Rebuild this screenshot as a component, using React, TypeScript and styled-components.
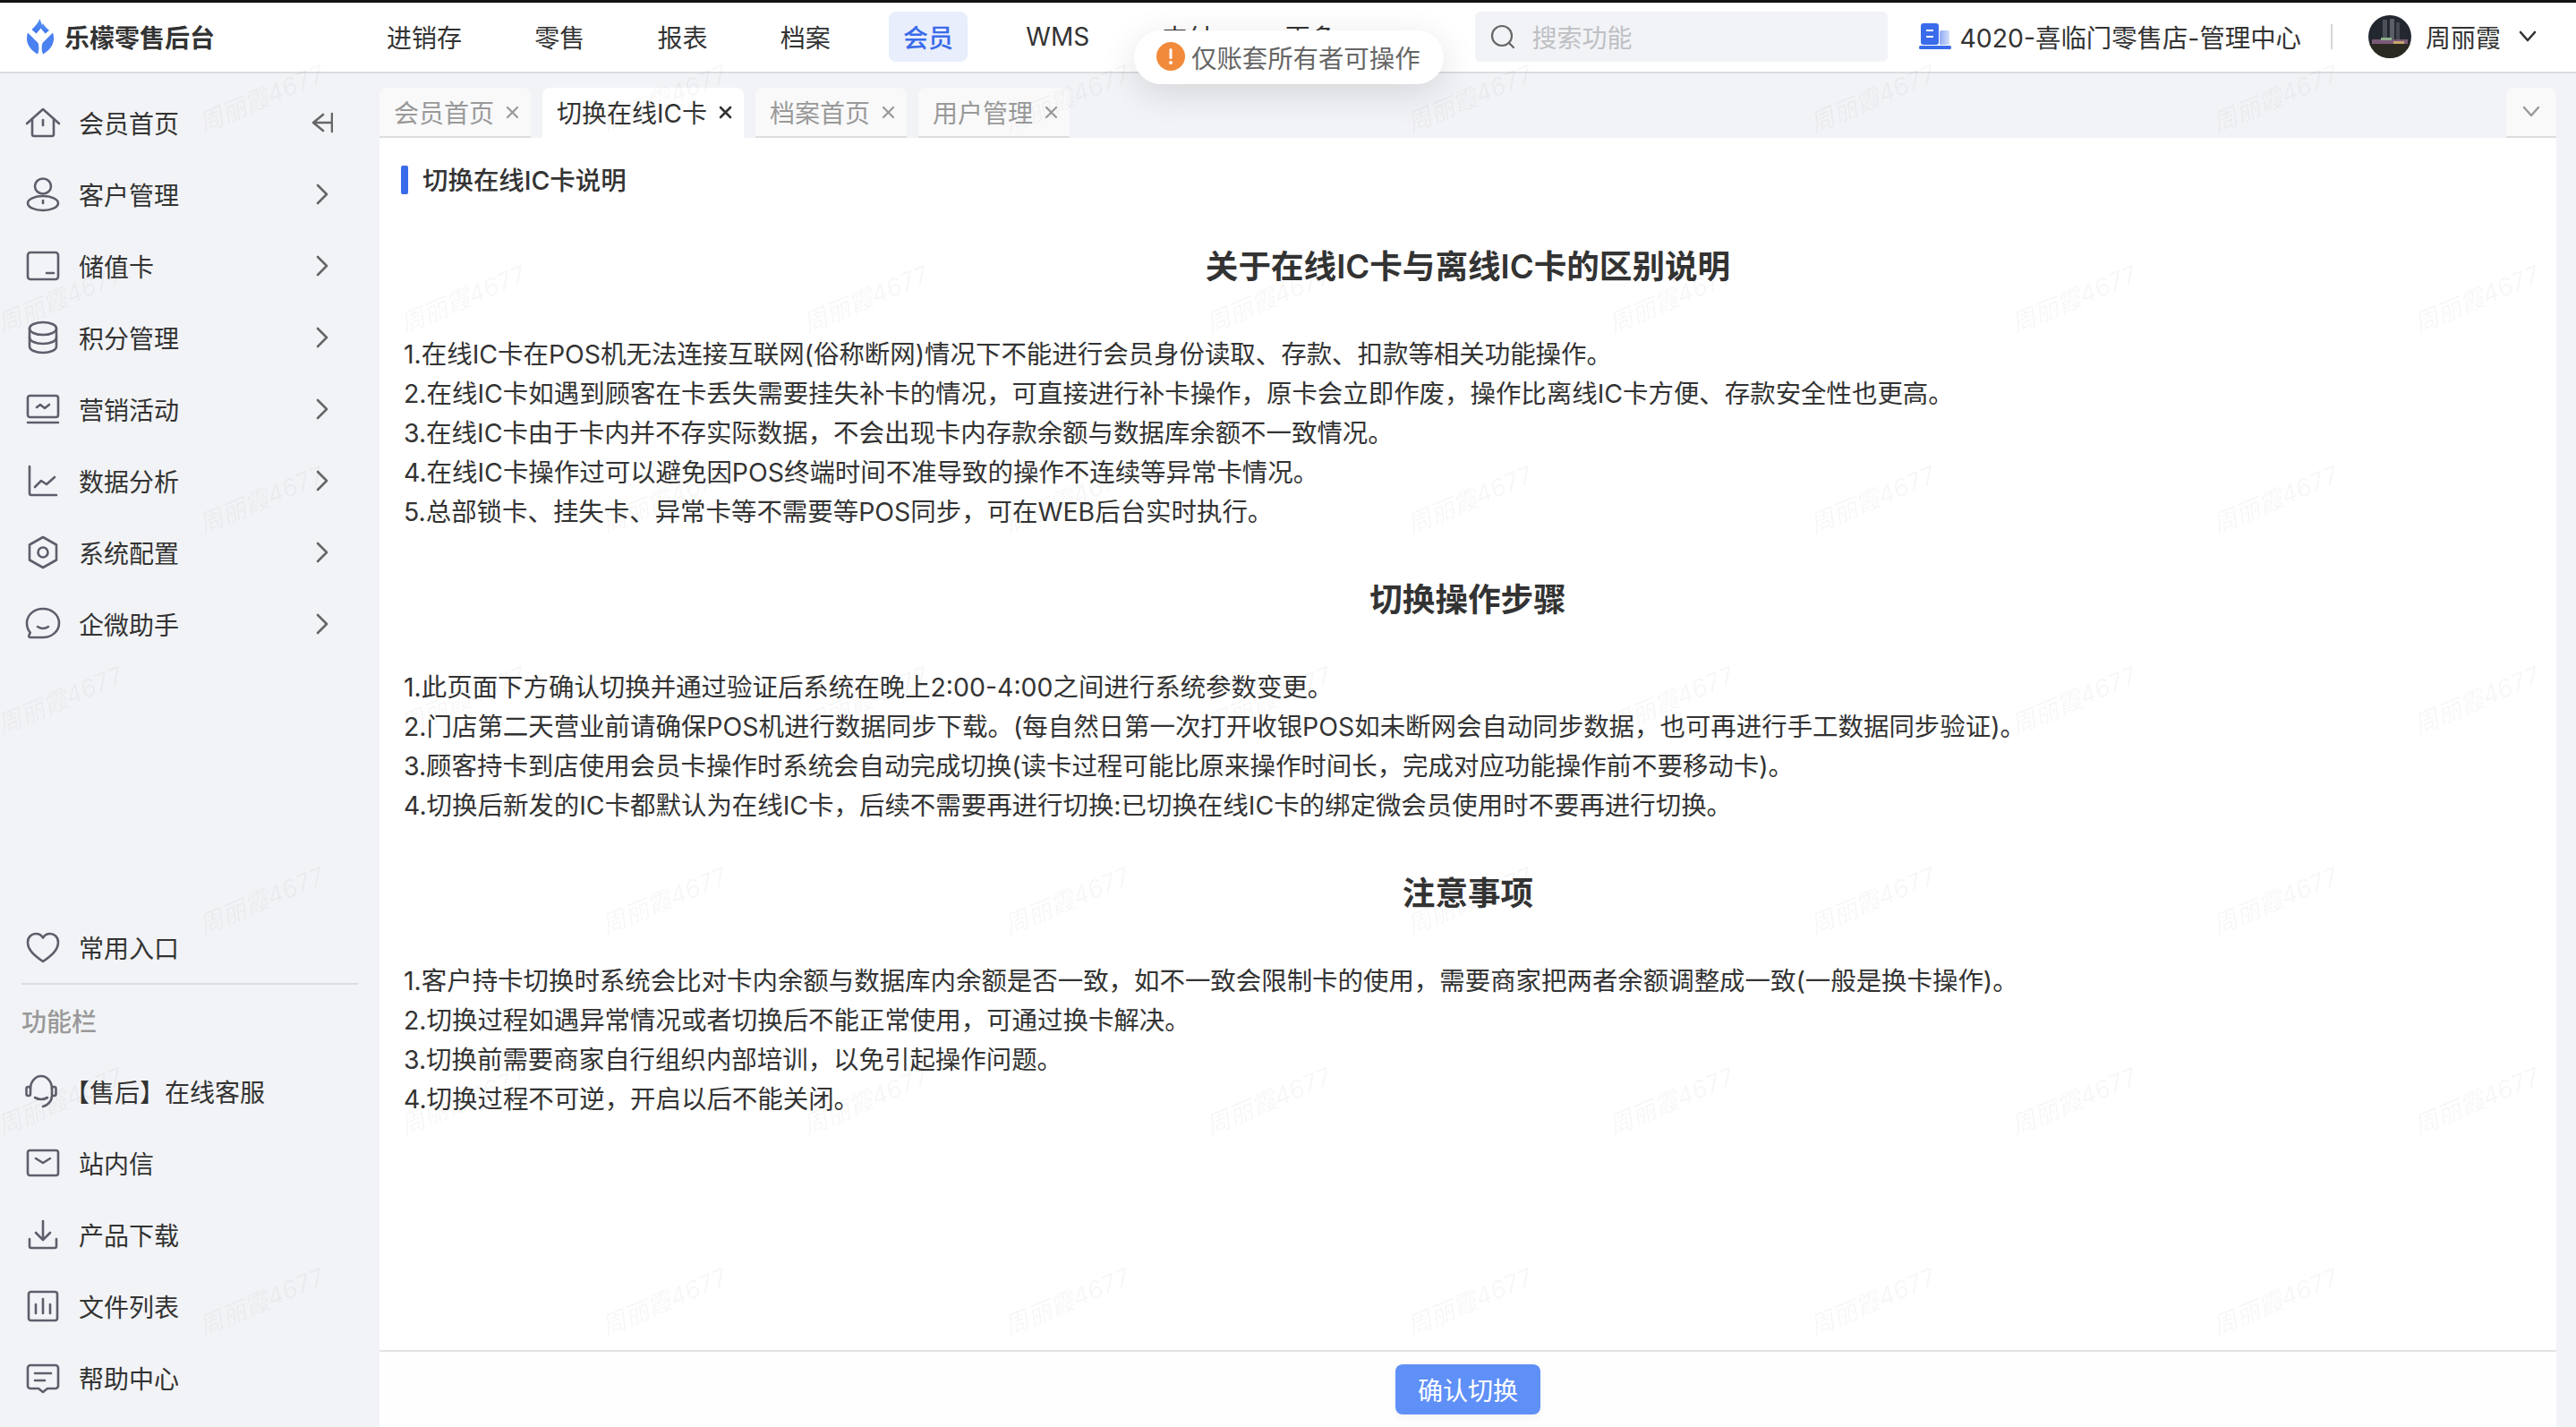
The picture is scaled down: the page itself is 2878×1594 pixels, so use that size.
import * as React from 'react';
import styled, { createGlobalStyle } from 'styled-components';

const GlobalStyle = createGlobalStyle`
  html, body {
    margin: 0;
    padding: 0;
    height: 100%;
    overflow: hidden;
    background: #f2f3f6;
    font-family: Inter, "Noto Sans CJK SC", sans-serif;
    color: #333;
  }
  * {
    box-sizing: border-box;
  }
`;

const Page = styled.div`
  position: relative;
  display: flex;
  flex-direction: column;
  height: 1594px;
  overflow: hidden;
`;
const TopStrip = styled.div`
  height: 3px;
  flex-shrink: 0;
  background: #121212;
`;
const Header = styled.header`
  display: flex;
  align-items: center;
  flex-shrink: 0;
  height: 79px;
  padding-right: 44px;
  padding-bottom: 2px;
  background: #fff;
  border-bottom: 2px solid #dcdde0;
  font-size: 28px;
`;
const Brand = styled.div`
  display: flex;
  align-items: center;
  flex-shrink: 0;
  gap: 12px;
  width: 416px;
  padding-left: 30px;
`;
const BrandName = styled.span`
  font-weight: 700;
  color: #333;
`;
const Nav = styled.nav`
  display: flex;
  align-items: center;
  gap: 49.25px;
`;
const NavItem = styled.div<{ $active?: boolean }>`
  display: flex;
  align-items: center;
  height: 56px;
  padding: 0 16px;
  border-radius: 8px;
  background: ${(p) => (p.$active ? '#e8eefb' : 'transparent')};
  color: ${(p) => (p.$active ? '#3a6bea' : '#333')};
  font-weight: ${(p) => (p.$active ? 500 : 400)};
`;
const Search = styled.div`
  display: flex;
  align-items: center;
  gap: 18px;
  width: 461px;
  height: 56px;
  margin-left: auto;
  padding-left: 17px;
  border-radius: 6px;
  background: #f2f3f6;
  color: #bfc0c4;
`;
const Shop = styled.div`
  display: flex;
  align-items: center;
  gap: 9px;
  margin-left: 35px;
  font-size: 28.4px;
`;
const HeaderDivider = styled.div`
  width: 2px;
  height: 28px;
  margin: 0 40px 0 33px;
  background: #d4d5d8;
`;
const User = styled.div`
  display: flex;
  align-items: center;
`;
const UserName = styled.span`
  margin: 0 20px 0 16px;
`;
const Avatar = styled.svg`
  display: block;
  width: 48px;
  height: 48px;
`;

const Toast = styled.div`
  position: absolute;
  top: 34px;
  left: 1267px;
  z-index: 5;
  display: flex;
  align-items: center;
  gap: 7px;
  height: 60px;
  padding: 0 26px 2px 25px;
  border-radius: 30px;
  background: #fff;
  box-shadow: 0 10px 40px rgba(0, 0, 0, 0.12);
  font-size: 28.4px;
  color: #666;
`;

const Body = styled.div`
  display: flex;
  flex: 1;
  min-height: 0;
`;
const Sidebar = styled.aside`
  display: flex;
  flex-direction: column;
  flex-shrink: 0;
  width: 424px;
  padding: 15px 0 15px;
  font-size: 28px;
`;
const SideGroup = styled.div<{ $bottom?: boolean }>`
  display: flex;
  flex-direction: column;
  margin-top: ${(p) => (p.$bottom ? 'auto' : '0')};
`;
const SideItem = styled.div`
  display: flex;
  align-items: center;
  height: 80px;
  padding: 0 52px 0 28px;
`;
const SideIcon = styled.svg`
  flex-shrink: 0;
  width: 40px;
  height: 40px;
  fill: none;
  stroke: #5c5f6b;
  stroke-width: 2.6;
  stroke-linecap: round;
  stroke-linejoin: round;
`;
const SideLabel = styled.span<{ $pull?: boolean }>`
  flex: 1;
  margin-left: ${(p) => (p.$pull ? '4px' : '20px')};
`;
const SideChevron = styled.svg`
  flex-shrink: 0;
  width: 24px;
  height: 24px;
  fill: none;
  stroke: #666;
  stroke-width: 2.6;
  stroke-linecap: round;
  stroke-linejoin: round;
`;
const SideDivider = styled.div`
  height: 2px;
  margin: 0 24px;
  background: #dcdde0;
`;
const SideTitle = styled.div`
  display: flex;
  align-items: center;
  height: 79px;
  padding-left: 24px;
  font-weight: 500;
  color: #999;
`;

const Main = styled.main`
  display: flex;
  flex-direction: column;
  flex: 1;
  min-width: 0;
  padding-right: 22px;
`;
const TabBar = styled.div`
  display: flex;
  flex-shrink: 0;
  gap: 13px;
  height: 72px;
  padding-top: 16px;
  font-size: 28px;
`;
const Tab = styled.div<{ $active?: boolean }>`
  display: flex;
  align-items: center;
  gap: 13px;
  padding: 0 13px 0 16px;
  border-radius: 8px 8px 0 0;
  background: ${(p) => (p.$active ? '#fff' : '#f9f9fa')};
  border-bottom: 2px solid ${(p) => (p.$active ? '#fff' : '#dcdde0')};
  color: ${(p) => (p.$active ? '#333' : '#999')};
`;
const TabMore = styled(Tab)`
  justify-content: center;
  width: 56px;
  margin-left: auto;
  padding: 0;
`;
const TabClose = styled.svg<{ $active?: boolean }>`
  width: 15px;
  height: 15px;
  fill: none;
  stroke: ${(p) => (p.$active ? '#333' : '#999')};
  stroke-width: ${(p) => (p.$active ? 2.6 : 2.2)};
  stroke-linecap: round;
`;
const Panel = styled.section`
  display: flex;
  flex-direction: column;
  flex: 1;
  min-height: 0;
  background: #fff;
`;
const Article = styled.div`
  flex: 1;
  min-height: 0;
  padding: 29px 26px 0;
  font-size: 28.45px;
`;
const SectionHead = styled.div`
  display: flex;
  align-items: center;
  gap: 16px;
  height: 32px;
  margin-left: -2px;
  font-weight: 500;
  color: #333;
  &::before {
    content: '';
    width: 8px;
    height: 32px;
    margin-top: 3px;
    border-radius: 2px;
    background: #3a6bea;
  }
`;
const Heading = styled.h2<{ $first?: boolean }>`
  margin: ${(p) => (p.$first ? '56px' : '49px')} 0 49px;
  font-size: 36.6px;
  line-height: 54px;
  font-weight: 600;
  text-align: center;
  color: #333;
`;
const Line = styled.p`
  margin: 0 0 0 1px;
  line-height: 44px;
  white-space: nowrap;
  color: #333;
`;
const Footer = styled.footer`
  display: flex;
  justify-content: center;
  flex-shrink: 0;
  height: 86px;
  padding-top: 14px;
  border-top: 2px solid #e2e2e2;
  background: #fefefe;
`;
const ConfirmButton = styled.button`
  width: 162px;
  height: 56px;
  padding: 0;
  border: none;
  border-radius: 8px;
  background: #5f90f7;
  box-shadow: 0 3px 8px rgba(0, 0, 0, 0.05);
  font: inherit;
  font-size: 28px;
  color: #fff;
`;

const Watermarks = styled.div`
  position: absolute;
  top: -4px;
  left: 0;
  right: 0;
  bottom: 0;
  z-index: 4;
  overflow: hidden;
  pointer-events: none;
`;
const WatermarkRow = styled.div<{ $odd?: boolean }>`
  display: flex;
  height: 224px;
  margin-left: ${(p) => (p.$odd ? '-159px' : '66px')};
`;
const Watermark = styled.span`
  display: flex;
  align-items: center;
  justify-content: center;
  flex-shrink: 0;
  width: 450px;
  font-size: 27.5px;
  font-style: italic;
  color: rgba(0, 0, 0, 0.045);
  transform: rotate(-23deg);
`;

const menuIcons: Record<string, React.ReactNode> = {
  home: (
    <>
      <path d="M2 21 20 5l18 16" />
      <path d="M8 16v17a2 2 0 0 0 2 2h20a2 2 0 0 0 2-2V16" />
      <path d="M20 17v6" />
    </>
  ),
  user: (
    <>
      <ellipse cx="20" cy="11" rx="9" ry="8.5" />
      <ellipse cx="20" cy="30" rx="17" ry="8" />
      <path d="M20 27v3" />
    </>
  ),
  card: (
    <>
      <rect x="3" y="5" width="34" height="30" rx="3" />
      <path d="M24 28h8" />
    </>
  ),
  coins: (
    <>
      <ellipse cx="20" cy="10" rx="15" ry="7" />
      <path d="M5 10v20c0 4 7 7 15 7s15-3 15-7V10" />
      <path d="M5 20c0 4 7 7 15 7s15-3 15-7" />
    </>
  ),
  screen: (
    <>
      <rect x="3" y="5" width="34" height="24" rx="2.5" />
      <path d="M3 35h34" />
      <path d="M13 18l4-3 5 4 5-4" />
    </>
  ),
  chart: (
    <>
      <path d="M5 4v30a2 2 0 0 0 2 2h28" />
      <path d="M11 27l7-7 6 4 9-8" />
    </>
  ),
  hex: (
    <>
      <path d="M20 3l15 8.5v17L20 37 5 28.5v-17z" />
      <circle cx="20" cy="20" r="5.5" />
    </>
  ),
  chat: (
    <>
      <path d="M20 3c10 0 18 7 18 16s-8 16-18 16H6c-1.5 0-2.2-1-1.6-2.2l1.4-3.2C3.4 27 2 23.500 2 19 2 10 10 3 20 3z" />
      <path d="M14 23q6 4 12 0" />
    </>
  ),
  heart: (
    <path d="M20 36C10 29 3 23 3 14.500 3 8.500 7.500 5 12 5c3.500 0 6.500 1.800 8 4.500C21.500 6.800 24.500 5 28 5c4.500 0 9 3.500 9 9.500C37 23 30 29 20 36z" />
  ),
  headset: (
    <>
      <path d="M6 17C6 8.500 12 3 18 3s12 5.500 12 14" />
      <rect x="1.500" y="15" width="4.500" height="10" rx="2" />
      <rect x="30" y="15" width="4.500" height="10" rx="2" />
      <path d="M11 27q7 4 14 0" />
      <path d="M30 25c0 6-5 11-10 12" />
    </>
  ),
  mail: (
    <>
      <rect x="3" y="6" width="34" height="28" rx="2.5" />
      <path d="M12 15l8 5 8-5" />
    </>
  ),
  download: (
    <>
      <path d="M20 5v20" />
      <path d="M12 18l8 8 8-8" />
      <path d="M5 25v8a2 2 0 0 0 2 2h26a2 2 0 0 0 2-2v-8" />
    </>
  ),
  bars: (
    <>
      <rect x="4" y="4" width="32" height="32" rx="2.5" />
      <path d="M12 18v10M20 12v16M28 18v10" />
    </>
  ),
  help: (
    <>
      <path d="M6 6h28a3 3 0 0 1 3 3v20a3 3 0 0 1-3 3h-9l-5 4-5-4H6a3 3 0 0 1-3-3V9a3 3 0 0 1 3-3z" />
      <path d="M11 15h18M11 23h11" />
    </>
  ),
};

const MenuIcon = ({ name }: { name: string }) => <SideIcon viewBox="0 0 40 40">{menuIcons[name]}</SideIcon>;

const topMenu = [
  { icon: 'home', label: '会员首页', collapse: true },
  { icon: 'user', label: '客户管理' },
  { icon: 'card', label: '储值卡' },
  { icon: 'coins', label: '积分管理' },
  { icon: 'screen', label: '营销活动' },
  { icon: 'chart', label: '数据分析' },
  { icon: 'hex', label: '系统配置' },
  { icon: 'chat', label: '企微助手' },
];
const toolMenu = [
  { icon: 'headset', label: '【售后】在线客服', pull: true },
  { icon: 'mail', label: '站内信' },
  { icon: 'download', label: '产品下载' },
  { icon: 'bars', label: '文件列表' },
  { icon: 'help', label: '帮助中心' },
];
const navItems = ['进销存', '零售', '报表', '档案', '会员', 'WMS', '支付', '更多'];
const tabs = ['会员首页', '切换在线IC卡', '档案首页', '用户管理'];

const sections = [
  {
    title: '关于在线IC卡与离线IC卡的区别说明',
    lines: [
      '1.在线IC卡在POS机无法连接互联网(俗称断网)情况下不能进行会员身份读取、存款、扣款等相关功能操作。',
      '2.在线IC卡如遇到顾客在卡丢失需要挂失补卡的情况，可直接进行补卡操作，原卡会立即作废，操作比离线IC卡方便、存款安全性也更高。',
      '3.在线IC卡由于卡内并不存实际数据，不会出现卡内存款余额与数据库余额不一致情况。',
      '4.在线IC卡操作过可以避免因POS终端时间不准导致的操作不连续等异常卡情况。',
      '5.总部锁卡、挂失卡、异常卡等不需要等POS同步，可在WEB后台实时执行。',
    ],
  },
  {
    title: '切换操作步骤',
    lines: [
      '1.此页面下方确认切换并通过验证后系统在晚上2:00-4:00之间进行系统参数变更。',
      '2.门店第二天营业前请确保POS机进行数据同步下载。(每自然日第一次打开收银POS如未断网会自动同步数据，也可再进行手工数据同步验证)。',
      '3.顾客持卡到店使用会员卡操作时系统会自动完成切换(读卡过程可能比原来操作时间长，完成对应功能操作前不要移动卡)。',
      '4.切换后新发的IC卡都默认为在线IC卡，后续不需要再进行切换:已切换在线IC卡的绑定微会员使用时不要再进行切换。',
    ],
  },
  {
    title: '注意事项',
    lines: [
      '1.客户持卡切换时系统会比对卡内余额与数据库内余额是否一致，如不一致会限制卡的使用，需要商家把两者余额调整成一致(一般是换卡操作)。',
      '2.切换过程如遇异常情况或者切换后不能正常使用，可通过换卡解决。',
      '3.切换前需要商家自行组织内部培训，以免引起操作问题。',
      '4.切换过程不可逆，开启以后不能关闭。',
    ],
  },
];

const RightChevron = () => (
  <SideChevron viewBox="0 0 24 24">
    <path d="M7 2l10 10L7 22" />
  </SideChevron>
);

const CollapseIcon = () => (
  <SideChevron viewBox="0 0 24 24">
    <path d="M13 3 2 12l11 9M2 12h21M23 2v20" />
  </SideChevron>
);

const Logo = () => (
  <svg width="30" height="40" viewBox="0 0 30 40">
    <defs>
      <linearGradient id="logoFill" x1="0" y1="0" x2="0" y2="1">
        <stop offset="0" stopColor="#5a93f6" />
        <stop offset="1" stopColor="#3f74ee" />
      </linearGradient>
    </defs>
    <g fill="url(#logoFill)">
      <path d="M14.500 0C13 4 9 8.500 5.500 12L10.500 16.500 17.500 8.500 14.500 0Z" />
      <path d="M18 5C19.500 8 22.500 11 25 13L20.500 16.500 15.500 10.500Z" />
    </g>
    <path d="M1 15.500 12.500 27C14 31 13.500 36 12 39.500 5.500 36 0 29.500 0 22.500 0 20 .3 17.500 1 15.500Z" fill="#4a80f0" />
    <path d="M29 15.500 17.500 27C16 31 16.500 36 18 39.500 24.500 36 30 29.500 30 22.500 30 20 29.700 17.500 29 15.500Z" fill="#4a80f0" />
  </svg>
);

const ShopIcon = () => (
  <svg width="36" height="30" viewBox="0 0 36 30">
    <defs>
      <linearGradient id="shopSide" x1="0" y1="0" x2="1" y2="0">
        <stop offset="0" stopColor="#8eaaf2" />
        <stop offset="1" stopColor="#d5e0fa" />
      </linearGradient>
    </defs>
    <rect x="2" y="0" width="20" height="24" rx="3" fill="#3a6bea" />
    <rect x="23" y="8" width="11" height="16" rx="1.500" fill="url(#shopSide)" />
    <rect x="0" y="25" width="36" height="4" rx="1.500" fill="#3a6bea" />
    <path d="M8 8h8M8 15h8" stroke="#fff" strokeWidth="2" />
  </svg>
);

const UserAvatar = () => (
  <Avatar viewBox="0 0 48 48">
    <defs>
      <clipPath id="avatarClip">
        <circle cx="24" cy="24" r="24" />
      </clipPath>
    </defs>
    <g clipPath="url(#avatarClip)">
      <rect width="48" height="48" fill="#23272f" />
      <rect y="32" width="48" height="16" fill="#2b2a22" />
      <rect x="16" y="5" width="5" height="22" fill="#4c5058" />
      <rect x="24" y="4" width="5" height="23" fill="#5a5e66" />
      <rect x="31" y="8" width="4" height="19" fill="#454952" />
      <rect x="4" y="27" width="40" height="5" fill="#7a5a78" />
      <rect x="14" y="25" width="12" height="3" fill="#8fb08a" />
      <rect x="28" y="29" width="12" height="3" fill="#c9a36a" />
    </g>
  </Avatar>
);

const App = () => (
  <Page>
    <GlobalStyle />
    <TopStrip />
    <Header>
      <Brand>
        <Logo />
        <BrandName>乐檬零售后台</BrandName>
      </Brand>
      <Nav>
        {navItems.map((item) => (
          <NavItem key={item} $active={item === '会员'}>
            {item}
          </NavItem>
        ))}
      </Nav>
      <Search>
        <svg width="28" height="28" viewBox="0 0 28 28" fill="none" stroke="#666" strokeWidth="2.200" strokeLinecap="round">
          <circle cx="13" cy="13" r="11" />
          <path d="M21 21l5 5" />
        </svg>
        搜索功能
      </Search>
      <Shop>
        <ShopIcon />
        <span>4020-喜临门零售店-管理中心</span>
      </Shop>
      <HeaderDivider />
      <User>
        <UserAvatar />
        <UserName>周丽霞</UserName>
        <svg width="20" height="14" viewBox="0 0 20 14" fill="none" stroke="#333" strokeWidth="2.600" strokeLinecap="round" strokeLinejoin="round">
          <path d="M2 2l8 9 8-9" />
        </svg>
      </User>
    </Header>
    <Toast>
      <svg width="32" height="32" viewBox="0 0 32 32">
        <circle cx="16" cy="16" r="16" fill="#f28a3b" />
        <rect x="14.500" y="7" width="3" height="12" rx="1.500" fill="#fff" />
        <circle cx="16" cy="23" r="2" fill="#fff" />
      </svg>
      仅账套所有者可操作
    </Toast>
    <Body>
      <Sidebar>
        <SideGroup>
          {topMenu.map((item) => (
            <SideItem key={item.label}>
              <MenuIcon name={item.icon} />
              <SideLabel>{item.label}</SideLabel>
              {item.collapse ? <CollapseIcon /> : <RightChevron />}
            </SideItem>
          ))}
        </SideGroup>
        <SideGroup $bottom>
          <SideItem>
            <MenuIcon name="heart" />
            <SideLabel>常用入口</SideLabel>
          </SideItem>
          <SideDivider />
          <SideTitle>功能栏</SideTitle>
          {toolMenu.map((item) => (
            <SideItem key={item.label}>
              <MenuIcon name={item.icon} />
              <SideLabel $pull={item.pull}>{item.label}</SideLabel>
            </SideItem>
          ))}
        </SideGroup>
      </Sidebar>
      <Main>
        <TabBar>
          {tabs.map((tab) => {
            const active = tab === '切换在线IC卡';
            return (
              <Tab key={tab} $active={active}>
                {tab}
                <TabClose viewBox="0 0 15 15" $active={active}>
                  <path d="M2 2l11 11M13 2 2 13" />
                </TabClose>
              </Tab>
            );
          })}
          <TabMore>
            <svg width="20" height="14" viewBox="0 0 20 14" fill="none" stroke="#999" strokeWidth="2.400" strokeLinecap="round" strokeLinejoin="round">
              <path d="M2 2l8 9 8-9" />
            </svg>
          </TabMore>
        </TabBar>
        <Panel>
          <Article>
            <SectionHead>切换在线IC卡说明</SectionHead>
            {sections.map((section, index) => (
              <div key={section.title}>
                <Heading $first={index === 0}>{section.title}</Heading>
                {section.lines.map((line) => (
                  <Line key={line}>{line}</Line>
                ))}
              </div>
            ))}
          </Article>
          <Footer>
            <ConfirmButton>确认切换</ConfirmButton>
          </Footer>
        </Panel>
      </Main>
    </Body>
    <Watermarks>
      {Array.from({ length: 8 }).map((_, row) => (
        <WatermarkRow key={row} $odd={row % 2 === 1}>
          {Array.from({ length: 7 }).map((_, col) => (
            <Watermark key={col}>周丽霞4677</Watermark>
          ))}
        </WatermarkRow>
      ))}
    </Watermarks>
  </Page>
);

export default App;
